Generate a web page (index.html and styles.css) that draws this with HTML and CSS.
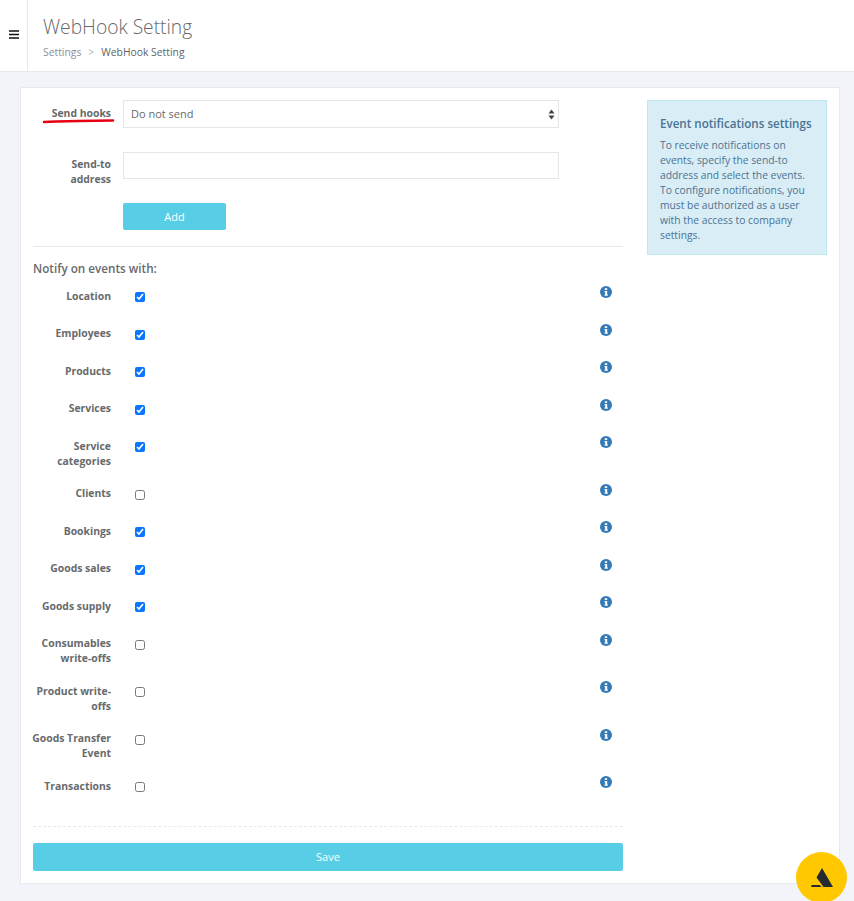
FILE: index.html
```html
<!DOCTYPE html>
<html lang="en">
<head>
<meta charset="utf-8">
<title>WebHook Setting</title>
<link rel="stylesheet" href="styles.css">
</head>
<body>
<header class="topbar">
  <div class="toggle">
    <svg class="burger" width="10" height="9" viewBox="0 0 10 9"><path d="M0 1h10M0 4.500h10M0 8h10" stroke="#111" stroke-width="1.500"/></svg>
  </div>
  <div class="heading">
    <h1 class="title">WebHook Setting</h1>
    <div class="crumbs"><span class="crumb-link">Settings</span><span class="crumb-sep">&gt;</span><span class="crumb-now">WebHook Setting</span></div>
  </div>
</header>
<main class="panel">
  <div class="layout">
    <form class="form">
      <div class="field field-select">
        <label class="field-label">Send hooks</label>
        <div class="select-wrap">
          <select class="control select"><option>Do not send</option></select>
          <svg class="select-arrows" width="7" height="11" viewBox="0 0 7 11"><path d="M3.500 0.500L6.500 4.500H0.500ZM3.500 10.500L0.500 6.500H6.500Z" fill="#444"/></svg>
        </div>
      </div>
      <div class="field field-address">
        <label class="field-label">Send-to address</label>
        <input class="control input" type="text">
      </div>
      <div class="add-row"><button type="button" class="btn btn-add">Add</button></div>
      <hr class="rule">
      <div class="notify-title">Notify on events with:</div>
      <div class="events">
        <div class="event"><label class="event-label">Location</label><input class="check" type="checkbox" checked><svg class="info" viewBox="0 0 12 12"><use href="#i"/></svg></div>
        <div class="event"><label class="event-label">Employees</label><input class="check" type="checkbox" checked><svg class="info" viewBox="0 0 12 12"><use href="#i"/></svg></div>
        <div class="event"><label class="event-label">Products</label><input class="check" type="checkbox" checked><svg class="info" viewBox="0 0 12 12"><use href="#i"/></svg></div>
        <div class="event"><label class="event-label">Services</label><input class="check" type="checkbox" checked><svg class="info" viewBox="0 0 12 12"><use href="#i"/></svg></div>
        <div class="event"><label class="event-label">Service categories</label><input class="check" type="checkbox" checked><svg class="info" viewBox="0 0 12 12"><use href="#i"/></svg></div>
        <div class="event"><label class="event-label">Clients</label><input class="check" type="checkbox"><svg class="info" viewBox="0 0 12 12"><use href="#i"/></svg></div>
        <div class="event"><label class="event-label">Bookings</label><input class="check" type="checkbox" checked><svg class="info" viewBox="0 0 12 12"><use href="#i"/></svg></div>
        <div class="event"><label class="event-label">Goods sales</label><input class="check" type="checkbox" checked><svg class="info" viewBox="0 0 12 12"><use href="#i"/></svg></div>
        <div class="event"><label class="event-label">Goods supply</label><input class="check" type="checkbox" checked><svg class="info" viewBox="0 0 12 12"><use href="#i"/></svg></div>
        <div class="event"><label class="event-label">Consumables write-offs</label><input class="check" type="checkbox"><svg class="info" viewBox="0 0 12 12"><use href="#i"/></svg></div>
        <div class="event"><label class="event-label">Product write-offs</label><input class="check" type="checkbox"><svg class="info" viewBox="0 0 12 12"><use href="#i"/></svg></div>
        <div class="event"><label class="event-label">Goods Transfer Event</label><input class="check" type="checkbox"><svg class="info" viewBox="0 0 12 12"><use href="#i"/></svg></div>
        <div class="event"><label class="event-label">Transactions</label><input class="check" type="checkbox"><svg class="info" viewBox="0 0 12 12"><use href="#i"/></svg></div>
      </div>
      <hr class="rule-dashed">
      <button type="button" class="btn btn-save">Save</button>
    </form>
    <aside class="note">
      <h4 class="note-title">Event notifications settings</h4>
      <p class="note-text">To receive notifications on events, specify the send-to address and select the events. To configure notifications, you must be authorized as a user with the access to company settings.</p>
    </aside>
  </div>
</main>
<svg class="scribble" width="74" height="6" viewBox="0 0 74 6"><path d="M2 4C14 3.700 20 3.200 36 3C50 2.800 62 2.700 71 2.500" fill="none" stroke="#e60012" stroke-width="2.500" stroke-linecap="round"/></svg>
<div class="fab">
  <svg width="22" height="19" viewBox="0 0 22 19"><path d="M11 0L22 19H12.500L5.500 9.500Z" fill="#262b30"/><path d="M0.700 17H8.800L10.500 19H0Z" fill="#262b30"/></svg>
</div>
<svg class="defs" width="0" height="0"><defs><g id="i"><circle cx="6" cy="6" r="6" fill="#337ab7"/><path d="M4.800 2.200h2.400v1.700H4.800ZM4.500 5h2.700v3.500h.6v1.300H4.500V8.500h.7V6.300h-.7Z" fill="#fff"/></g></defs></svg>
</body>
</html>
```
FILE: styles.css
```css
* { box-sizing: border-box; }
html, body { margin: 0; padding: 0; }
body {
  background: #f3f4f9;
  color: #676a6c;
  font-family: "Open Sans", "Liberation Sans", sans-serif;
  font-size: 11px;
  position: relative;
  height: 901px;
  overflow: hidden;
}
.topbar {
  display: flex;
  height: 72px;
  background: #fff;
  border-bottom: 1px solid #e7eaec;
}
.toggle {
  width: 28px;
  border-right: 1px solid #e7eaec;
  display: flex;
  align-items: center;
  justify-content: center;
}
.burger { display: block; margin-bottom: 2px; }
.heading { padding: 14px 0 0 15px; }
.title {
  margin: 0;
  font-size: 19.200px;
  font-weight: 300;
  line-height: 26px;
  color: #676a6c;
}
.crumbs { margin-top: 5px; font-size: 10.300px; line-height: 14px; letter-spacing: 0.020px; }
.crumb-link { color: #8a9099; }
.crumb-sep { color: #a9adb3; margin: 0 7px; }
.crumb-now { color: #5f6366; }
.panel {
  margin: 15px 14px 0 20px;
  height: 797px;
  background: #fff;
  border: 1px solid #e7eaec;
  padding: 12px;
}
.layout { display: flex; gap: 24px; align-items: flex-start; }
.form { width: 590px; flex: none; }
.note {
  width: 180px;
  flex: none;
  background: #d9edf7;
  border: 1px solid #bce8f1;
  color: #4a7391;
  padding: 15px 12px 12px;
  height: 155px;
}
.note-title {
  margin: 0 0 6px;
  font-size: 11.600px;
  font-weight: 600;
  line-height: 16px;
}
.note-text { margin: 0; font-size: 10.300px; line-height: 15px; }
.field { display: flex; gap: 12px; }
.field-select { margin-bottom: 24px; }
.field-address { margin-bottom: 16px; }
.field-label {
  width: 78px;
  flex: none;
  text-align: right;
  font-weight: 700;
  font-size: 10.400px;
  line-height: 15px;
  padding-top: 5px;
}
.field-select .field-label { padding-top: 6px; }
.select-wrap { position: relative; width: 436px; }
.control {
  display: block;
  width: 436px;
  background: #fff;
  border: 1px solid #e5e6e7;
  border-radius: 0;
  font-family: inherit;
  color: #676a6c;
  outline: none;
}
.select {
  height: 28px;
  padding: 0 7px 2px;
  font-size: 11px;
  appearance: none;
}
.select-arrows { position: absolute; right: 4px; top: 9px; pointer-events: none; }
.input { height: 27px; }
.add-row { padding-left: 90px; }
.btn {
  display: block;
  border: 0;
  border-radius: 2px;
  background: #58cde6;
  color: #fff;
  font-family: inherit;
  font-size: 11px;
  padding: 0;
}
.btn-add { width: 103px; height: 27px; }
.rule { border: 0; border-top: 1px solid #e7eaec; margin: 16px 0 14px; }
.notify-title { font-weight: 600; font-size: 11.700px; line-height: 15px; margin-bottom: 12.500px; }
.events { display: flex; flex-direction: column; gap: 17.500px; }
.event { display: flex; min-height: 20px; position: relative; }
.event-label {
  width: 80px;
  margin-left: -2px;
  flex: none;
  text-align: right;
  font-weight: 700;
  font-size: 10.400px;
  line-height: 15px;
}
.check {
  width: 10px;
  height: 10px;
  margin: 3.500px 0 0 24px;
  flex: none;
  accent-color: #0a75ff;
}
.info {
  position: absolute;
  left: 567px;
  top: -2.100px;
  width: 12px;
  height: 12px;
}
.rule-dashed { border: 0; border-top: 1px dashed #e7eaec; margin: 27px 0 16px; }
.btn-save { width: 590px; height: 28px; padding-bottom: 1px; }
.scribble { position: absolute; left: 42px; top: 118px; }
.fab {
  position: fixed;
  left: 796px;
  top: 852px;
  width: 51px;
  height: 51px;
  border-radius: 50%;
  background: #ffc800;
  display: flex;
  align-items: center;
  justify-content: center;
}
.fab svg { display: block; }
.defs { position: absolute; }
```
